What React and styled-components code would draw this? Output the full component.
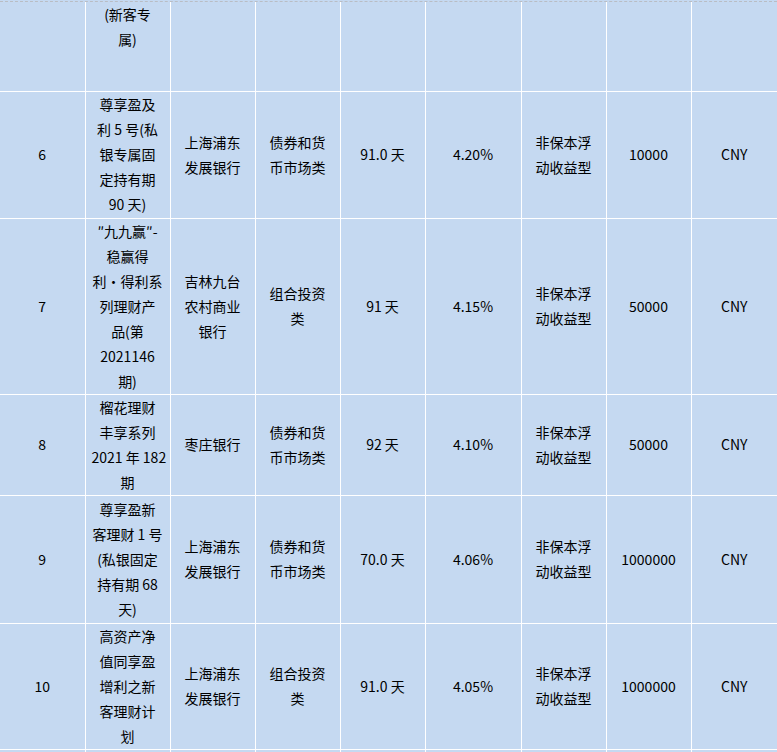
import React from 'react';
import styled, { createGlobalStyle } from 'styled-components';

// --- colours taken from the sheet ---
const colors = {
  cell: '#C5D9F1',
  rule: '#FFFFFF',
  dash: '#B9BDC4',
  text: '#000000',
};

const GlobalStyle = createGlobalStyle`
  html, body {
    margin: 0;
    padding: 0;
    background: ${colors.cell};
  }
  body {
    font-family: "Noto Sans CJK SC", "Noto Sans", sans-serif;
    color: ${colors.text};
  }
`;

const Frame = styled.div`
  width: 777px;
  overflow: hidden;
  margin-top: 1px;
  border-top: 1px dashed ${colors.dash};
`;

const Sheet = styled.table`
  width: 777px;
  table-layout: fixed;
  border-collapse: collapse;
  background: ${colors.cell};
`;

const Row = styled.tr`
  height: ${({ $height }) => ($height ? `${$height}px` : 'auto')};

  &:first-child td {
    border-top: 0;
  }
`;

const Cell = styled.td`
  border: 1px solid ${colors.rule};
  padding: 0 6px;
  font-size: 14px;
  line-height: 25px;
  text-align: center;
  vertical-align: ${({ $top }) => ($top ? 'top' : 'middle')};
  white-space: nowrap;
  overflow: hidden;

  &:first-child {
    border-left: 0;
  }
  &:last-child {
    border-right: 0;
  }
`;

const Lines = ({ text }) => {
  const parts = Array.isArray(text) ? text : [text];
  return parts.map((line, i) => (
    <React.Fragment key={i}>
      {i > 0 && <br />}
      {line}
    </React.Fragment>
  ));
};

const widths = [85, 85, 85, 85, 85, 96, 85, 85, 86];

const products = [
  {
    no: '6',
    height: 127,
    name: ['尊享盈及', '利 5 号(私', '银专属固', '定持有期', '90 天)'],
    bank: ['上海浦东', '发展银行'],
    kind: ['债券和货', '币市场类'],
    term: '91.0 天',
    rate: '4.20%',
    income: ['非保本浮', '动收益型'],
    min: '10000',
    cur: 'CNY',
  },
  {
    no: '7',
    height: 176,
    name: ['″九九赢″-', '稳赢得', '利·得利系', '列理财产', '品(第', '2021146', '期)'],
    bank: ['吉林九台', '农村商业', '银行'],
    kind: ['组合投资', '类'],
    term: '91 天',
    rate: '4.15%',
    income: ['非保本浮', '动收益型'],
    min: '50000',
    cur: 'CNY',
  },
  {
    no: '8',
    height: 100,
    name: ['榴花理财', '丰享系列', '2021 年 182', '期'],
    bank: '枣庄银行',
    kind: ['债券和货', '币市场类'],
    term: '92 天',
    rate: '4.10%',
    income: ['非保本浮', '动收益型'],
    min: '50000',
    cur: 'CNY',
  },
  {
    no: '9',
    height: 128,
    name: ['尊享盈新', '客理财 1 号', '(私银固定', '持有期 68', '天)'],
    bank: ['上海浦东', '发展银行'],
    kind: ['债券和货', '币市场类'],
    term: '70.0 天',
    rate: '4.06%',
    income: ['非保本浮', '动收益型'],
    min: '1000000',
    cur: 'CNY',
  },
  {
    no: '10',
    height: 126,
    name: ['高资产净', '值同享盈', '增利之新', '客理财计', '划'],
    bank: ['上海浦东', '发展银行'],
    kind: ['组合投资', '类'],
    term: '91.0 天',
    rate: '4.05%',
    income: ['非保本浮', '动收益型'],
    min: '1000000',
    cur: 'CNY',
  },
];

const fields = ['no', 'name', 'bank', 'kind', 'term', 'rate', 'income', 'min', 'cur'];

const App = () => (
  <>
    <GlobalStyle />
    <Frame>
      <Sheet>
        <colgroup>
          {widths.map((w, i) => (
            <col key={i} style={{ width: w }} />
          ))}
        </colgroup>
        <tbody>
          {/* tail of row 5, its top is scrolled away */}
          <Row $height={89}>
            {fields.map((f) => (
              <Cell key={f} $top>
                {f === 'name' && <Lines text={['(新客专', '属)']} />}
              </Cell>
            ))}
          </Row>
          {products.map((p) => (
            <Row key={p.no} $height={p.height}>
              {fields.map((f) => (
                <Cell key={f}>
                  <Lines text={p[f]} />
                </Cell>
              ))}
            </Row>
          ))}
          <Row $height={26}>
            {fields.map((f) => (
              <Cell key={f} />
            ))}
          </Row>
        </tbody>
      </Sheet>
    </Frame>
  </>
);

export default App;
